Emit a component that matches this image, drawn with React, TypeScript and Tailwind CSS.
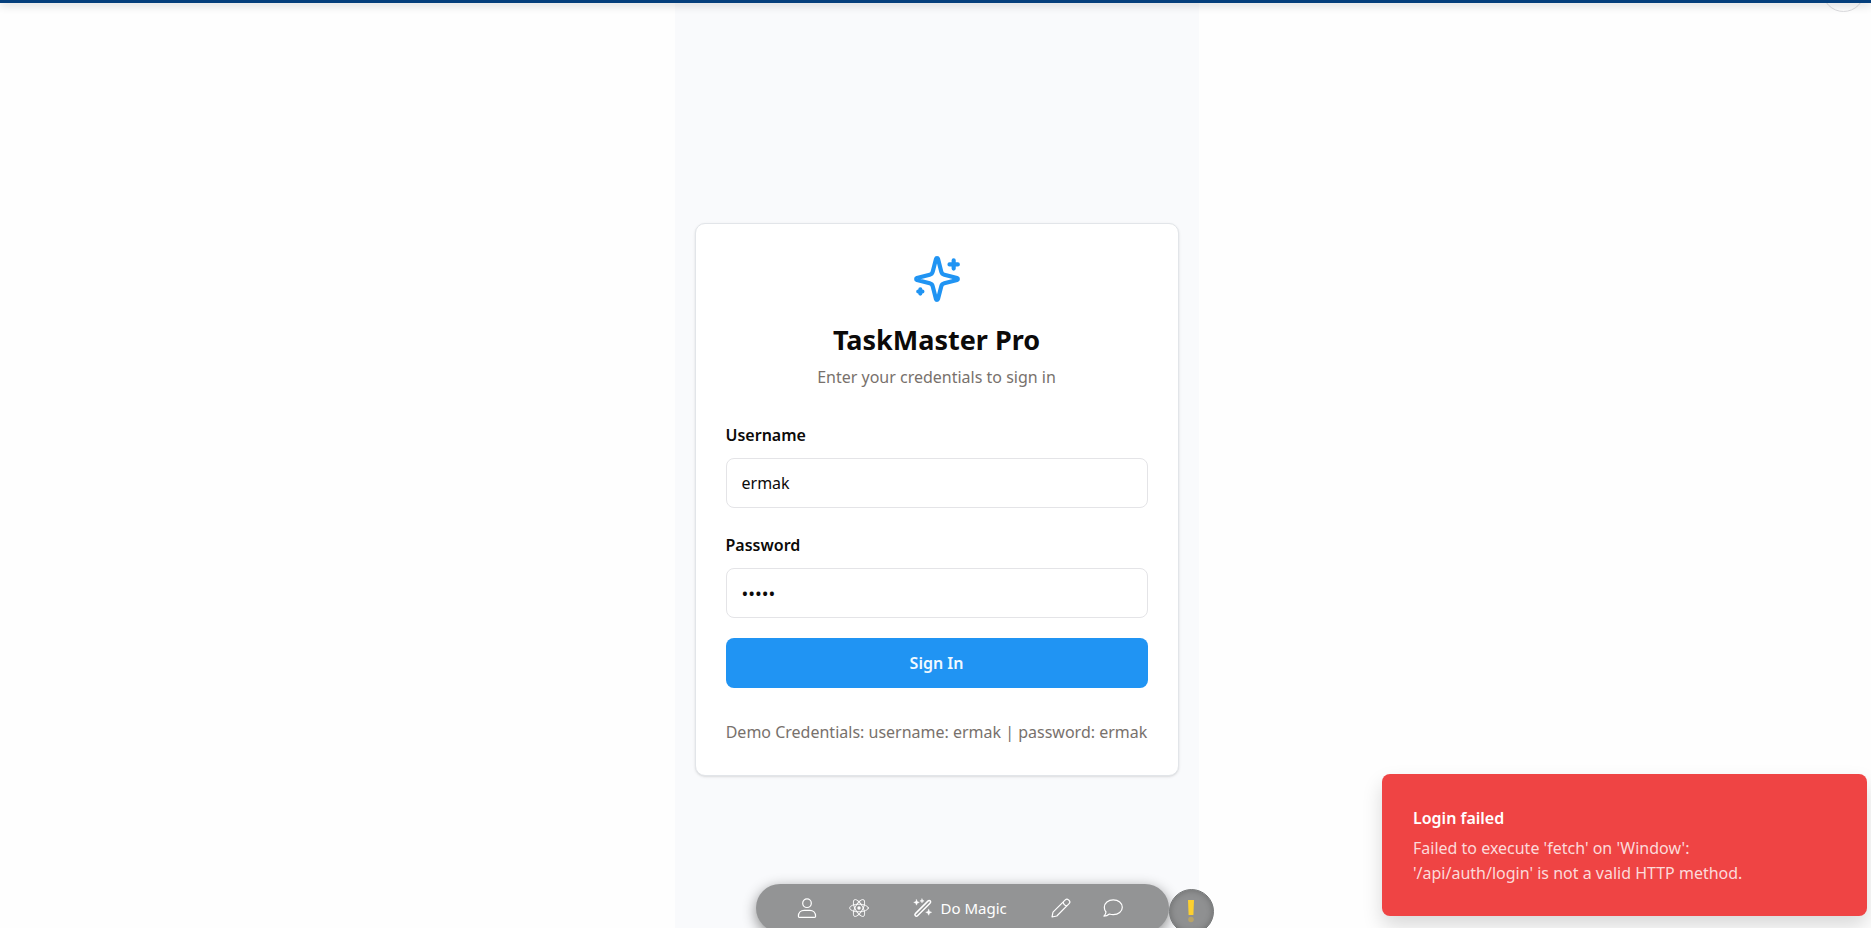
import { useState } from "react";
import type { ReactNode } from "react";

function SparklesLogo() {
  return (
    <svg
      className="size-[50px] text-[#2094f3]"
      viewBox="0 0 24 24"
      fill="none"
      stroke="currentColor"
      strokeWidth="2"
      strokeLinecap="round"
      strokeLinejoin="round"
      aria-hidden="true"
    >
      <path d="M9.937 15.5A2 2 0 0 0 8.5 14.063l-6.135-1.582a.5.5 0 0 1 0-.962L8.5 9.936A2 2 0 0 0 9.937 8.5l1.582-6.135a.5.5 0 0 1 .963 0L14.063 8.5A2 2 0 0 0 15.5 9.937l6.135 1.581a.5.5 0 0 1 0 .964L15.5 14.063a2 2 0 0 0-1.437 1.437l-1.582 6.135a.5.5 0 0 1-.963 0z" />
      <path d="M20 3v4M22 5h-4M4 17v2M5 18H3" />
    </svg>
  );
}

function LineIcon({ children }: { children: ReactNode }) {
  return (
    <svg
      className="size-5 shrink-0"
      viewBox="0 0 20 20"
      fill="none"
      stroke="currentColor"
      strokeWidth="1.2"
      strokeLinecap="round"
      strokeLinejoin="round"
      aria-hidden="true"
    >
      {children}
    </svg>
  );
}

function PersonIcon() {
  return (
    <LineIcon>
      <circle cx="10" cy="5.2" r="4.3" />
      <path d="M1.4 18.2c0-3.6 2.4-5.900 5.800-5.900h5.600c3.400 0 5.800 2.300 5.800 5.900 0 .7-.4 1.100-1 1.100H2.400c-.6 0-1-.4-1-1.100Z" />
    </LineIcon>
  );
}

function AtomIcon() {
  return (
    <LineIcon>
      <g strokeWidth="0.9">
        <ellipse cx="10" cy="10" rx="9.4" ry="3.8" />
        <ellipse cx="10" cy="10" rx="9.4" ry="3.8" transform="rotate(60 10 10)" />
        <ellipse cx="10" cy="10" rx="9.4" ry="3.8" transform="rotate(120 10 10)" />
      </g>
      <circle cx="10" cy="10" r="1.7" fill="currentColor" stroke="none" />
    </LineIcon>
  );
}

function WandIcon() {
  return (
    <LineIcon>
      <path strokeWidth="1.5" d="M2.4 15.6 14.9 3.1c.8-.8 1.7-.8 2.3-.2s.6 1.5-.2 2.3L4.5 17.7c-.7.7-1.5.7-2.1.1s-.7-1.5 0-2.2Z" />
      <path
        fill="currentColor"
        strokeWidth="0.4"
        d="m3.5 1.6.8 2 2 .8-2 .8-.8 2-.8-2-2-.8 2-.8ZM9 .8l.6 1.5 1.5.6-1.5.6L9 5l-.6-1.5-1.5-.6 1.5-.6ZM15.7 11.3l.9 2.1 2.1.9-2.1.9-.9 2.1-.9-2.1-2.1-.9 2.1-.9Z"
      />
    </LineIcon>
  );
}

function PencilIcon() {
  return (
    <LineIcon>
      <path d="m1 19 1-4.800L14.300 1.900c1-1 2.200-1 3.200 0l.6.6c1 1 1 2.200 0 3.200L5.800 18ZM12.200 4c.2 2.200 1.600 3.600 3.800 3.800" />
    </LineIcon>
  );
}

function ChatIcon() {
  return (
    <LineIcon>
      <path d="M10.300 1.900c5.100 0 9 3.200 9 7.400s-3.900 7.400-9 7.400c-1.400 0-2.700-.2-3.900-.7-1.500 1.300-3.300 2.100-5.500 2.100 1.200-1.200 2-2.700 2.100-4.100C1.900 12.700 1.300 11.100 1.300 9.300c0-4.200 3.900-7.400 9-7.400Z" />
    </LineIcon>
  );
}

interface FieldProps {
  id: string;
  label: string;
  type: string;
  value: string;
  onChange: (value: string) => void;
}

function Field({ id, label, type, value, onChange }: FieldProps) {
  return (
    <div className="flex flex-col gap-2.5">
      <label htmlFor={id} className="text-base leading-[26px] font-semibold">
        {label}
      </label>
      <input
        id={id}
        type={type}
        value={value}
        onChange={(event) => onChange(event.target.value)}
        className="h-[50px] w-full rounded-lg border border-[#e4e4e7] bg-white px-[15px] text-base outline-none focus:border-[#2094f3] [&[type=password]]:text-lg"
      />
    </div>
  );
}

function LoginCard() {
  const [username, setUsername] = useState("ermak");
  const [password, setPassword] = useState("ermak");

  return (
    <section className="w-full rounded-[10px] border border-[#e2e5e9] bg-white px-[30px] py-[30px] shadow-sm">
      <header className="flex flex-col items-center text-center">
        <SparklesLogo />
        <h1 className="mt-5 text-[27px] leading-[32px] font-bold">TaskMaster Pro</h1>
        <p className="mt-2 text-base leading-[26px] text-[#78716c]">Enter your credentials to sign in</p>
      </header>
      <form className="mt-8 flex flex-col gap-5" onSubmit={(event) => event.preventDefault()}>
        <div className="flex flex-col gap-6">
          <Field id="username" label="Username" type="text" value={username} onChange={setUsername} />
          <Field id="password" label="Password" type="password" value={password} onChange={setPassword} />
        </div>
        <button type="submit" className="h-[50px] w-full rounded-lg bg-[#2094f3] text-base font-semibold text-[#f0f9ff]">
          Sign In
        </button>
      </form>
      <p className="mt-8 text-center text-base leading-[25px] text-[#78716c]">
        Demo Credentials: username: ermak | password: ermak
      </p>
    </section>
  );
}

function Toolbar() {
  return (
    <nav
      aria-label="Assistant"
      className="absolute top-[884px] left-1/2 flex h-12 w-[413px] -translate-x-[180px] items-center rounded-full bg-[#939495] pl-[41px] text-white shadow-[0_4px_14px_rgba(0,0,0,0.45)]"
    >
      <button type="button" aria-label="Profile"><PersonIcon /></button>
      <button type="button" aria-label="Components" className="ml-8"><AtomIcon /></button>
      <button type="button" className="ml-11 flex items-center gap-2 text-[15px]">
        <WandIcon />
        Do Magic
      </button>
      <button type="button" aria-label="Edit" className="ml-11"><PencilIcon /></button>
      <button type="button" aria-label="Chat" className="ml-8"><ChatIcon /></button>
    </nav>
  );
}

function WarningBadge() {
  return (
    <button
      type="button"
      aria-label="Warnings"
      className="absolute top-[889px] left-1/2 flex size-[45px] translate-x-[233px] justify-center rounded-full border border-[#77797a] bg-[#8f9091] pt-[10px] shadow-[inset_0_0_6px_rgba(0,0,0,0.25)]"
    >
      <svg className="h-6 w-2" viewBox="0 0 8 24" aria-hidden="true">
        <path d="M1 0h6l-.6 15H1.600Z" fill="#fdd02f" />
        <circle cx="4" cy="19.500" r="2.800" fill="#b9a467" />
      </svg>
    </button>
  );
}

function Toast() {
  return (
    <div
      role="alert"
      className="absolute right-1 bottom-3 w-[485px] rounded-lg bg-[#ef4444] px-[31px] pt-8 pb-[30px] text-white shadow-[0_10px_20px_rgba(0,0,0,0.15)]"
    >
      <p className="text-base leading-[25px] font-semibold">Login failed</p>
      <p className="mt-[5px] text-base leading-[25px] text-[#fcdada]">
        Failed to execute 'fetch' on 'Window':
        <br />
        '/api/auth/login' is not a valid HTTP method.
      </p>
    </div>
  );
}

export default function App() {
  return (
    <div className="relative flex min-h-screen justify-center overflow-hidden bg-[#fefefe] pl-0.5 font-['Noto_Sans','Open_Sans',sans-serif] text-[#0c0a09]">
      <div className="absolute inset-x-0 top-0 z-10 h-[3px] bg-[#053f7c] shadow-[0_1px_10px_rgba(0,0,0,0.3)]" />
      <div className="absolute -top-[31px] right-1.5 size-[43px] rounded-full border border-[#dcdcdf]" />
      <main className="flex w-full max-w-[524px] items-center bg-[#f9fafc] px-5 pt-[70px]">
        <LoginCard />
      </main>
      <Toolbar />
      <WarningBadge />
      <Toast />
    </div>
  );
}
